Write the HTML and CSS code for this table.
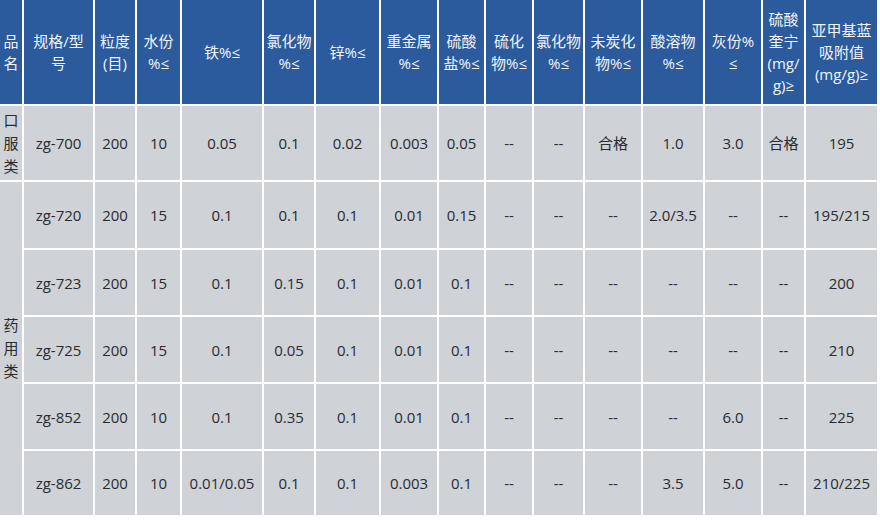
FILE: index.html
```html
<!DOCTYPE html>
<html lang="zh">
<head>
<meta charset="utf-8">
<link rel="stylesheet" href="styles.css">
</head>
<body>
<div class="spec">
  <div class="h">品<br>名</div>
  <div class="h">规格/型<br>号</div>
  <div class="h">粒度<br>(目)</div>
  <div class="h">水份<br>%≤</div>
  <div class="h">铁%≤</div>
  <div class="h">氯化物<br>%≤</div>
  <div class="h">锌%≤</div>
  <div class="h">重金属<br>%≤</div>
  <div class="h">硫酸<br>盐%≤</div>
  <div class="h">硫化<br>物%≤</div>
  <div class="h">氯化物<br>%≤</div>
  <div class="h">未炭化<br>物%≤</div>
  <div class="h">酸溶物<br>%≤</div>
  <div class="h">灰份%<br>≤</div>
  <div class="h">硫酸<br>奎宁<br>(mg/<br>g)≥</div>
  <div class="h">亚甲基蓝<br>吸附值<br>(mg/g)≥</div>

  <div class="c cat">口<br>服<br>类</div>
  <div class="c">zg-700</div><div class="c">200</div><div class="c">10</div><div class="c">0.05</div><div class="c">0.1</div><div class="c">0.02</div><div class="c">0.003</div><div class="c">0.05</div><div class="c">--</div><div class="c">--</div><div class="c">合格</div><div class="c">1.0</div><div class="c">3.0</div><div class="c">合格</div><div class="c">195</div>

  <div class="c cat span5">药<br>用<br>类</div>
  <div class="c">zg-720</div><div class="c">200</div><div class="c">15</div><div class="c">0.1</div><div class="c">0.1</div><div class="c">0.1</div><div class="c">0.01</div><div class="c">0.15</div><div class="c">--</div><div class="c">--</div><div class="c">--</div><div class="c">2.0/3.5</div><div class="c">--</div><div class="c">--</div><div class="c">195/215</div>

  <div class="c">zg-723</div><div class="c">200</div><div class="c">15</div><div class="c">0.1</div><div class="c">0.15</div><div class="c">0.1</div><div class="c">0.01</div><div class="c">0.1</div><div class="c">--</div><div class="c">--</div><div class="c">--</div><div class="c">--</div><div class="c">--</div><div class="c">--</div><div class="c">200</div>

  <div class="c">zg-725</div><div class="c">200</div><div class="c">15</div><div class="c">0.1</div><div class="c">0.05</div><div class="c">0.1</div><div class="c">0.01</div><div class="c">0.1</div><div class="c">--</div><div class="c">--</div><div class="c">--</div><div class="c">--</div><div class="c">--</div><div class="c">--</div><div class="c">210</div>

  <div class="c">zg-852</div><div class="c">200</div><div class="c">10</div><div class="c">0.1</div><div class="c">0.35</div><div class="c">0.1</div><div class="c">0.01</div><div class="c">0.1</div><div class="c">--</div><div class="c">--</div><div class="c">--</div><div class="c">--</div><div class="c">6.0</div><div class="c">--</div><div class="c">225</div>

  <div class="c">zg-862</div><div class="c">200</div><div class="c">10</div><div class="c">0.01/0.05</div><div class="c">0.1</div><div class="c">0.1</div><div class="c">0.003</div><div class="c">0.1</div><div class="c">--</div><div class="c">--</div><div class="c">--</div><div class="c">3.5</div><div class="c">5.0</div><div class="c">--</div><div class="c">210/225</div>
</div>
</body>
</html>
```
FILE: styles.css
```css
html, body {
  margin: 0;
  padding: 0;
  background: #ffffff;
}
body {
  width: 880px;
  height: 521px;
  overflow: hidden;
  font-family: "Open Sans", "Noto Sans CJK SC", sans-serif;
  font-size: 15px;
}
.spec {
  display: grid;
  grid-template-columns: 22px 69px 40px 43px 80px 50px 63px 56px 45px 46px 49px 56px 60px 56px 41px 71px;
  grid-template-rows: 104px 74px 66px 65px 65px 65px 64px;
  gap: 2px;
  width: 877px;
  background: #ffffff;
}
.h, .c {
  display: flex;
  align-items: center;
  justify-content: center;
  text-align: center;
  line-height: 22px;
  white-space: nowrap;
}
.h {
  background: #2b5b9c;
  color: #f2f4f8;
}
.c {
  background: #cfd2d6;
  color: #2a2c30;
}
.cat {
  line-height: 23px;
}
.span5 {
  grid-row: span 5;
}
```
